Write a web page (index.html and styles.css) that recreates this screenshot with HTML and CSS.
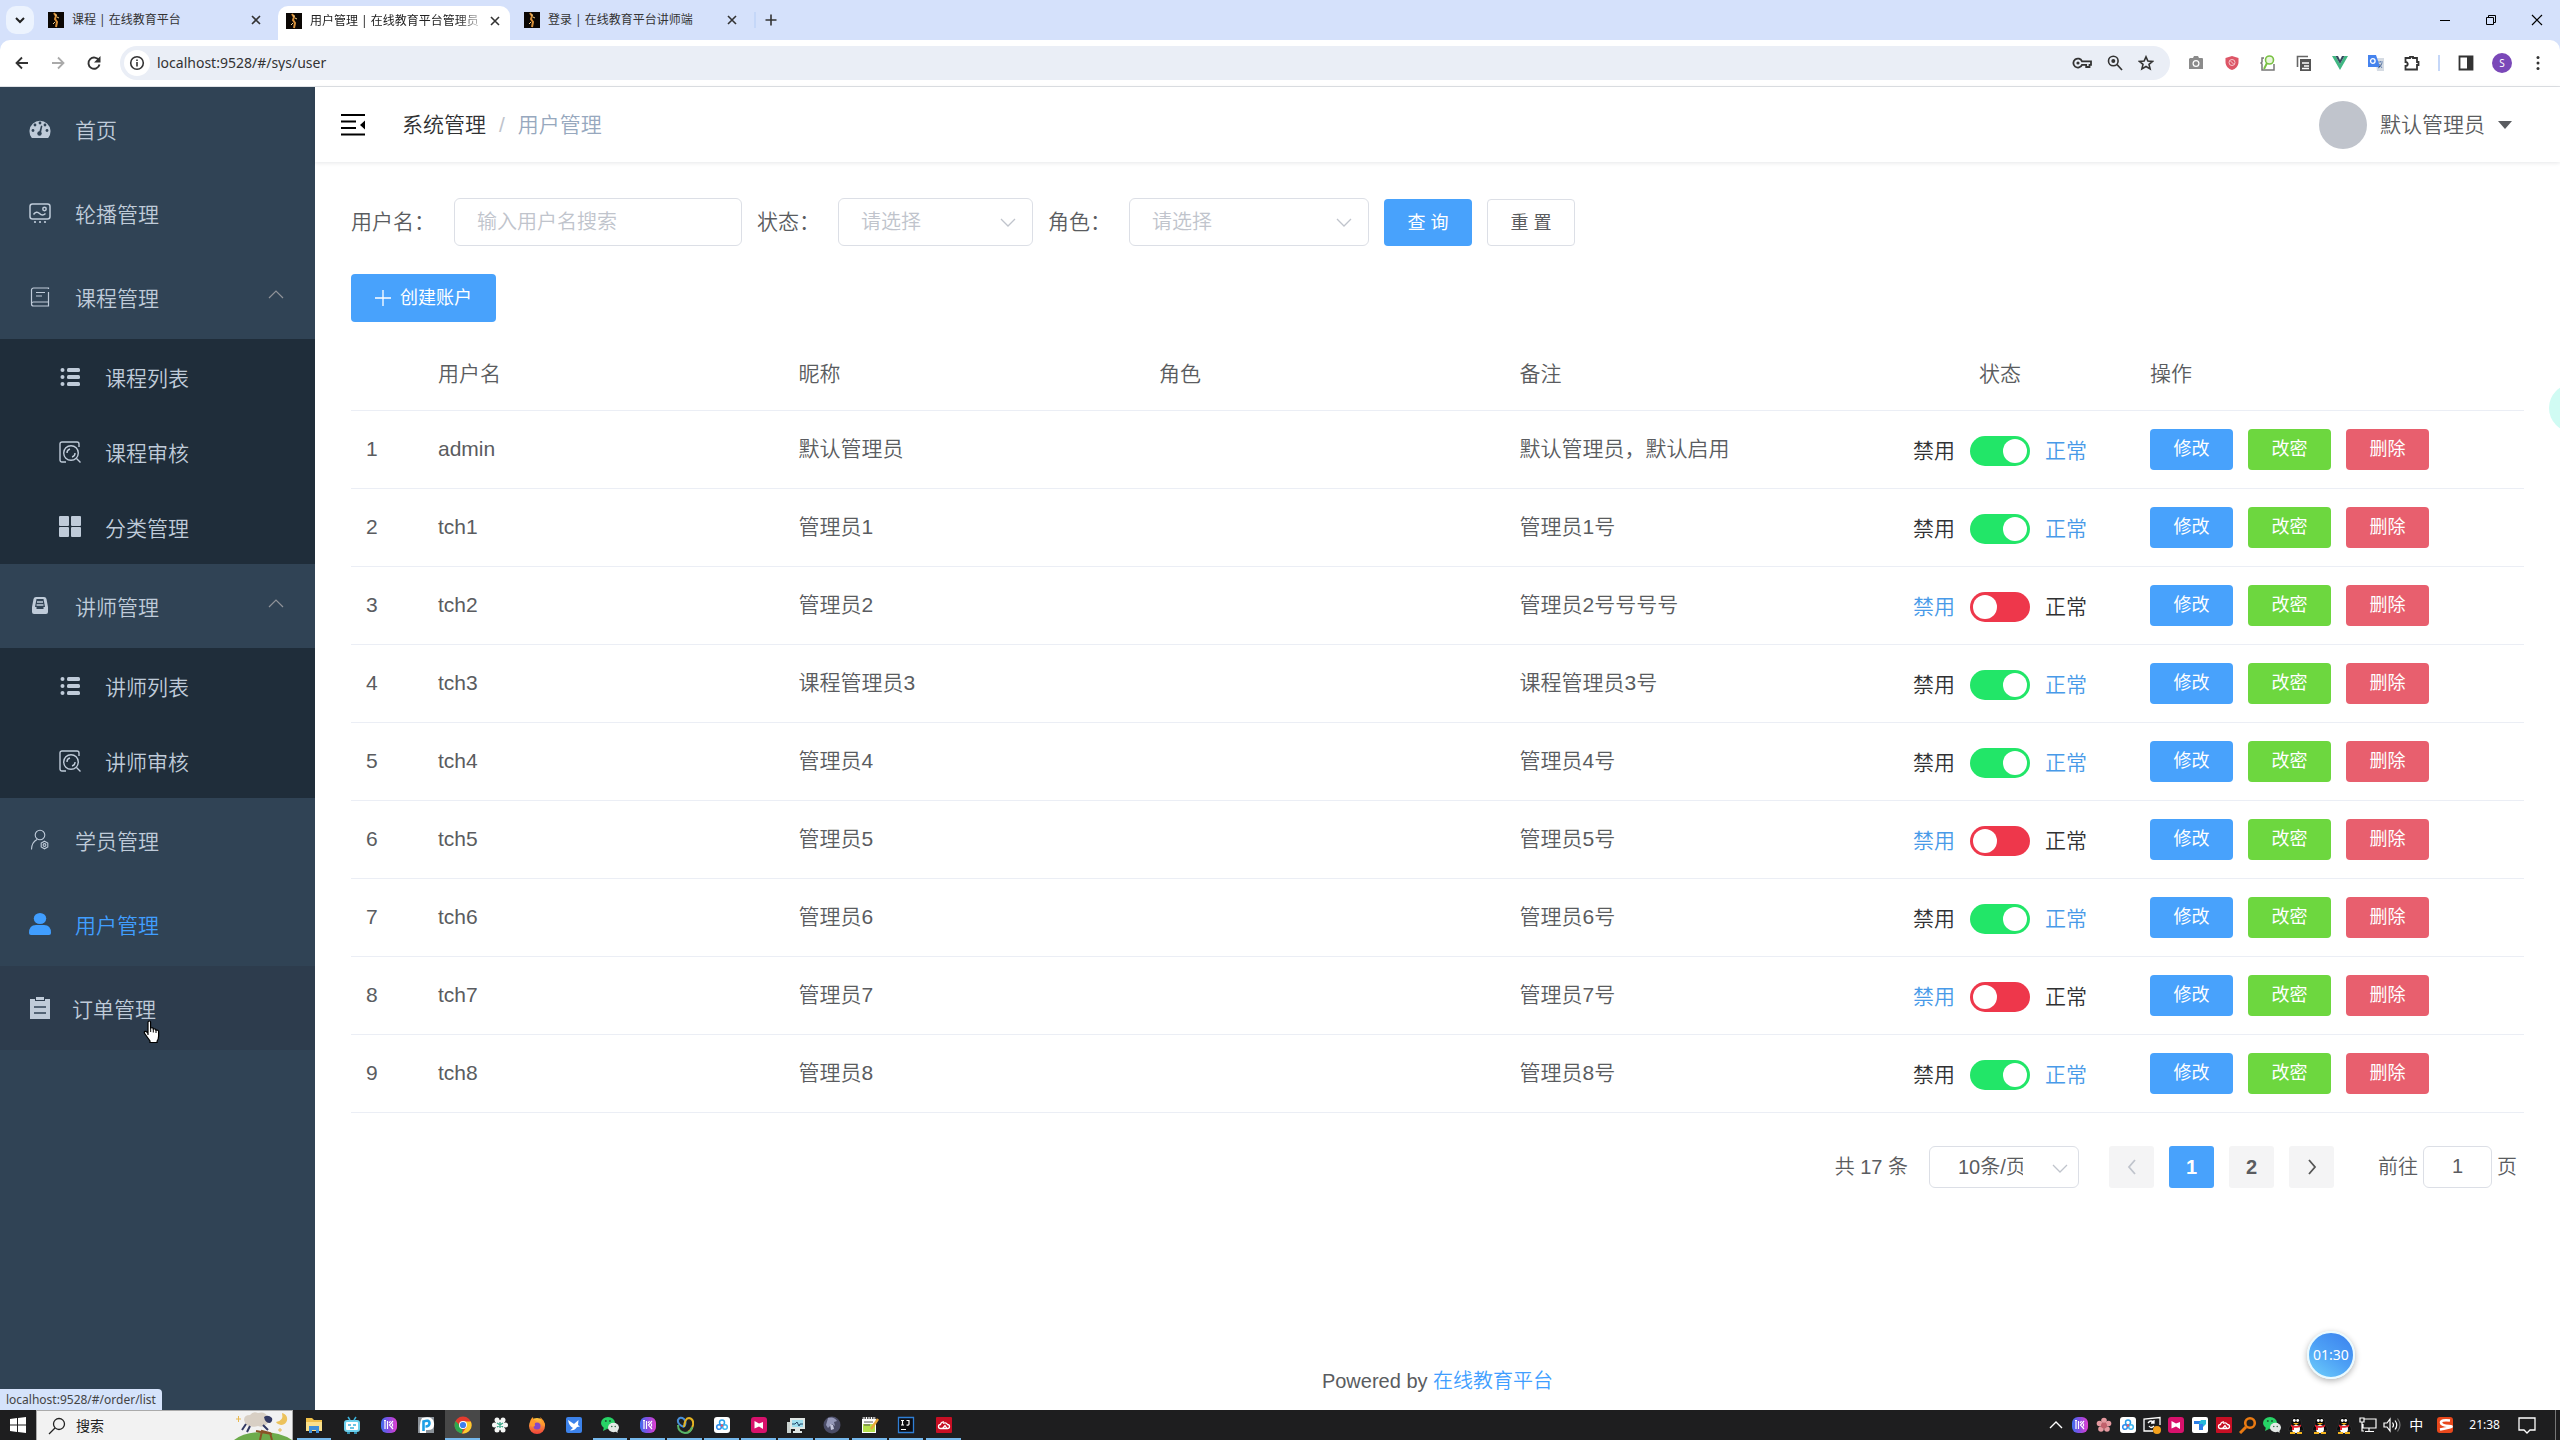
FILE: index.html
```html
<!DOCTYPE html>
<html lang="zh-CN">
<head>
<meta charset="utf-8">
<title>用户管理 | 在线教育平台管理员端</title>
<link rel="stylesheet" href="styles.css">
</head>
<body>
<svg class="sprite" aria-hidden="true">
  <defs>
    <linearGradient id="g-violet" x1="0" y1="0" x2="1" y2="0"><stop offset="0" stop-color="#3f6df0"/><stop offset=".5" stop-color="#8a4be0"/><stop offset="1" stop-color="#e23fd0"/></linearGradient>
    <linearGradient id="g-fire" x1="0" y1="0" x2="0" y2="1"><stop offset="0" stop-color="#ffc93c"/><stop offset="1" stop-color="#f0413a"/></linearGradient>
  </defs>
  <symbol id="favicon" viewBox="0 0 16 16"><path fill="#0b0704" d="M0 0h16v16H0z"/><path fill="none" stroke="#d9913a" stroke-width="2" d="M6 1l2 3-1 3 2 3-1 5"/><path stroke="#f6d18a" d="M9 5l2 1M7 10l-2 2M8 2v2"/></symbol>
  <symbol id="close" viewBox="0 0 16 16"><path fill="none" stroke="currentColor" stroke-width="1.6" d="M4 4l8 8M12 4l-8 8"/></symbol>
  <symbol id="chev" viewBox="0 0 16 16"><path fill="none" stroke="currentColor" stroke-width="1.300" d="M1 5l7 7 7-7"/></symbol>
  <symbol id="chev-up" viewBox="0 0 16 16"><path fill="none" stroke="currentColor" stroke-width="1.200" d="M1 11l7-7 7 7"/></symbol>
  <symbol id="list" viewBox="0 0 20 20"><g fill="currentColor"><circle cx="2.500" cy="3" r="2"/><circle cx="2.500" cy="10" r="2"/><circle cx="2.500" cy="17" r="2"/><rect x="7" y="1" width="13" height="4" rx="1.500"/><rect x="7" y="8" width="13" height="4" rx="1.500"/><rect x="7" y="15" width="13" height="4" rx="1.500"/></g></symbol>
  <symbol id="audit" viewBox="0 0 22 22"><g fill="none" stroke="currentColor" stroke-width="1.400"><path d="M7 21H3a2 2 0 0 1-2-2V3a2 2 0 0 1 2-2h15a2 2 0 0 1 2 2v3"/><circle cx="12" cy="12" r="7.300"/><path d="M17.500 17.500L21.500 21.500M8 12a4 4 0 0 1 3-4M16 12a4 4 0 0 1-3 4"/></g></symbol>
  <symbol id="kiwi" viewBox="0 0 18 18"><rect x="1" y="1" width="16" height="16" rx="6" fill="url(#g-violet)"/><path fill="none" stroke="#fff" stroke-width="1.200" d="M5 5v8M7.500 5v8M13 5l-3.500 4 3.500 4M10.500 5l-1.500 2M12.500 7.500v3M4 4.500h2"/></symbol>
  <symbol id="wechat" viewBox="0 0 18 18"><ellipse cx="7" cy="7" rx="7" ry="6" fill="#27d366"/><path fill="#27d366" d="M3 11l-1 4 4-2z"/><ellipse cx="12.500" cy="11.500" rx="5.500" ry="4.700" fill="#e4e9e6"/><path fill="#e4e9e6" d="M14 15l2.500 2V13z"/><g fill="#1c5c35"><circle cx="4.800" cy="5" r="1"/><circle cx="9" cy="5" r="1"/><circle cx="10.800" cy="10.500" r=".7"/><circle cx="14.200" cy="10.500" r=".7"/></g></symbol>
  <symbol id="netdisk" viewBox="0 0 18 18"><rect x="1" y="1" width="16" height="16" rx="3" fill="#fff"/><g fill="none" stroke-width="1.500"><circle cx="9" cy="6.500" r="2.500" stroke="#2ba2ee"/><circle cx="6" cy="11" r="2.300" stroke="#2b8cee"/><circle cx="12" cy="11" r="2.300" stroke="#3bb5f0"/></g><circle cx="9" cy="9.500" r="1.200" fill="#ee5a68"/></symbol>
  <symbol id="ribbon" viewBox="0 0 18 18"><rect x="1" y="1" width="16" height="16" rx="3" fill="#d8116c"/><path fill="#fff" d="M4.500 5l4.500 2.500 4-1.500v7l-4-2.500-4.500 2z"/></symbol>
  <symbol id="redcloud" viewBox="0 0 18 18"><rect x="1" y="1" width="16" height="16" rx="1" fill="#c70f24"/><path fill="none" stroke="#fff" stroke-width="1.300" d="M5.500 12.500a2 2 0 0 1 0-4A3 3 0 0 1 9 6M5.500 12.500h7a2 2 0 0 0 0-4A3 3 0 0 0 8 7.500M7.500 12.500l2.500-3 2 3"/></symbol>
  <symbol id="qq" viewBox="0 0 18 18"><path fill="#0a0a0a" stroke="#555" stroke-width=".3" d="M4 6a5 5 0 0 1 10 0v3c2 2 3 4 2 6-1 0-1-1-2-1-2 4-8 4-10 0-1 0-1 1-2 1-1-2 0-4 2-6z"/><ellipse cx="9" cy="13" rx="4" ry="4" fill="#fff"/><circle cx="7.300" cy="4.500" r="1.400" fill="#fff"/><circle cx="10.700" cy="4.500" r="1.400" fill="#fff"/><path fill="#f5b41c" d="M6 7h6l-3 2zM3 16h5v2H3zM10 16h5v2h-5z"/><path fill="#e5222f" d="M4 8.500c3 2 7 2 10 0v2c-2 1-4 1.500-7 1.300V14H5v-3l-1-.5z"/></symbol>
</svg>

<header class="browser">
  <div class="tabstrip">
    <button class="tab-search" aria-label="搜索标签页"><svg width="12" height="12" viewBox="0 0 12 12"><path fill="none" stroke="#222" stroke-width="2" d="M2 4l4 4 4-4"/></svg></button>
    <div class="tab"><svg class="i16"><use href="#favicon"/></svg><span class="tab-title">课程 | 在线教育平台</span><button class="tab-close" aria-label="关闭"><svg class="i16"><use href="#close"/></svg></button></div>
    <div class="tab tab-active"><svg class="i16"><use href="#favicon"/></svg><span class="tab-title">用户管理 | 在线教育平台管理员</span><button class="tab-close" aria-label="关闭"><svg class="i16"><use href="#close"/></svg></button></div>
    <div class="tab"><svg class="i16"><use href="#favicon"/></svg><span class="tab-title">登录 | 在线教育平台讲师端</span><button class="tab-close" aria-label="关闭"><svg class="i16"><use href="#close"/></svg></button></div>
    <span class="sep"></span>
    <button class="new-tab" aria-label="新标签页"><svg class="i16" viewBox="0 0 16 16"><path stroke="#333" stroke-width="1.600" d="M8 2.500v11M2.500 8h11"/></svg></button>
    <div class="win-buttons">
      <button aria-label="最小化"><svg width="12" height="12" viewBox="0 0 12 12"><path stroke="#000" d="M1 6.500h10"/></svg></button>
      <button aria-label="还原"><svg width="12" height="12" viewBox="0 0 12 12"><path fill="none" stroke="#000" d="M1.500 3.500h7v7h-7zM3.500 3.500v-2h7v7h-2"/></svg></button>
      <button aria-label="关闭"><svg width="12" height="12" viewBox="0 0 12 12"><path stroke="#000" stroke-width="1.200" d="M1 1l10 10M11 1L1 11"/></svg></button>
    </div>
  </div>
  <div class="toolbar">
    <div class="nav-buttons">
      <button aria-label="后退"><svg class="i16" viewBox="0 0 16 16"><path fill="none" stroke="#333" stroke-width="1.800" d="M14 8H3M8 2.500L2.500 8 8 13.500"/></svg></button>
      <button aria-label="前进"><svg class="i16" viewBox="0 0 16 16"><path fill="none" stroke="#aaa" stroke-width="1.800" d="M2 8h11M8 2.500L13.500 8 8 13.500"/></svg></button>
      <button aria-label="刷新"><svg class="i16" viewBox="0 0 16 16"><path fill="none" stroke="#333" stroke-width="1.900" d="M13 5.500A5.600 5.600 0 1 0 13.500 9.500"/><path fill="#333" d="M14.500 1v6.500H8z"/></svg></button>
    </div>
    <div class="omnibox">
      <span class="site-info"><svg class="i16" viewBox="0 0 16 16"><circle cx="8" cy="8" r="6.300" fill="none" stroke="#333" stroke-width="1.600"/><path stroke="#333" stroke-width="1.600" d="M8 7v4.500M8 4.500V6"/></svg></span>
      <input class="url" aria-label="地址栏" value="localhost:9528/#/sys/user">
      <div class="omni-icons">
        <svg width="20" height="16" viewBox="0 0 20 16"><path fill="none" stroke="#333" stroke-width="1.800" d="M10 6.300H19v3.600h-1.500V12h-3.300V9.800H10A4.500 4.500 0 1 1 10 6.300z"/><circle cx="6" cy="8" r="1.600" fill="#333"/></svg>
        <svg class="i16" viewBox="0 0 16 16"><path fill="none" stroke="#333" stroke-width="1.700" d="M10 9.500l5 5.500"/><circle cx="6.300" cy="6" r="4.800" fill="none" stroke="#333" stroke-width="1.600"/><circle cx="6.300" cy="6" r="2" fill="#333"/></svg>
        <svg class="i16" viewBox="0 0 16 16"><path fill="none" stroke="#333" stroke-width="1.600" d="M8 1.800l1.900 4.200 4.600.4-3.500 3 1.100 4.500L8 11.500l-4.100 2.400L5 9.400l-3.500-3L6.100 6z"/></svg>
      </div>
    </div>
    <div class="extensions">
      <svg class="i16" viewBox="0 0 16 16"><path fill="#8b8b8b" d="M2 3h3l1-2h4l1 2h3a1 1 0 0 1 1 1v10H1V4z"/><circle cx="8" cy="8.500" r="3.500" fill="#fff"/><circle cx="8" cy="8.500" r="2.200" fill="#8b8b8b"/></svg>
      <svg class="i16" viewBox="0 0 16 16"><path fill="#dd5566" d="M8 1l6.500 2v4c0 4-3 7-6.500 8-3.500-1-6.500-4-6.500-8V3z"/><circle cx="8" cy="7.500" r="3" fill="none" stroke="#f5c9ce"/><path stroke="#f5c9ce" d="M6 5.500l4 4"/></svg>
      <svg class="i16" viewBox="0 0 16 16"><path fill="none" stroke="#777" stroke-width="1.500" d="M4 3H2v4L1 8l1 1v6h12V9"/><circle cx="9.500" cy="5" r="4" fill="#e9f6dc" stroke="#78c142" stroke-width="1.600"/><path stroke="#78c142" stroke-width="2" d="M7 8l-3 6"/></svg>
      <svg class="i16" viewBox="0 0 16 16"><path fill="none" stroke="#666" stroke-width="1.600" d="M1.500 12V1.500H12"/><path fill="#555" d="M4 4h11v12H4z"/><path stroke="#fff" stroke-width="1.400" d="M6 8h7M8 11h5M6 13.500h7"/></svg>
      <svg class="i16" viewBox="0 0 16 16"><path fill="#41b883" d="M0 1h3.500L8 9l4.500-8H16L8 15z"/><path fill="#35495e" d="M3.500 1H6l2 4 2-4h2.500L8 9z"/></svg>
      <svg class="i16" viewBox="0 0 16 16"><path fill="#d5dbe3" d="M7 3h9v13H9z"/><path fill="#4583ee" d="M0 0h8l4 12H0z"/><circle cx="4.800" cy="6" r="2.300" fill="none" stroke="#fff" stroke-width="1.300"/><path stroke="#6b87b5" d="M10 7h5M12.500 6v1M14 8c-1 3-2 4-4 5M11 9l3 4"/></svg>
      <svg class="i16" viewBox="0 0 16 16"><path fill="none" stroke="#333" stroke-width="1.800" d="M1.500 3h4.500V1.800h3V3h4v4h1.500v3H13v4.500H1.500V11c3 0 3-4 0-4z"/></svg>
      <span class="sep"></span>
      <svg class="i16" viewBox="0 0 16 16"><path fill="none" stroke="#333" stroke-width="1.800" d="M1.500 1.500h13v13h-13z"/><path fill="#333" d="M9 1h6v14H9z"/></svg>
      <span class="profile">S</span>
      <svg class="i16" viewBox="0 0 16 16"><g fill="#333"><circle cx="8" cy="2.500" r="1.500"/><circle cx="8" cy="8" r="1.500"/><circle cx="8" cy="13.500" r="1.500"/></g></svg>
    </div>
  </div>
</header>

<div class="app">
  <nav class="sidebar">
    <a class="item" href="#/home"><svg class="i22" viewBox="0 0 22 22"><path fill="currentColor" d="M2.500 19.500A10.500 10.500 0 1 1 19.500 19.500q-.5 .5-1 .5h-15q-.5 0-1-.5z"/><g fill="#304355"><circle cx="11" cy="5" r="1.400"/><circle cx="6" cy="7" r="1.400"/><circle cx="16" cy="7" r="1.400"/><circle cx="4" cy="12.500" r="1.400"/><circle cx="18" cy="12.500" r="1.400"/><circle cx="10.500" cy="15.500" r="2.200"/><path d="M12 7.500l1.400.4-1.700 8-1.900-.5z"/></g></svg><span>首页</span></a>
    <a class="item" href="#/banner"><svg class="i22" viewBox="0 0 22 22"><g fill="none" stroke="currentColor" stroke-width="1.500"><rect x="1" y="2" width="20" height="15" rx="2.500"/><circle cx="15.500" cy="7" r="1.700"/><path d="M4.500 12.500q3-4 6-1t6 0"/></g><g fill="currentColor"><circle cx="6" cy="20" r="1.100"/><circle cx="11" cy="20" r="1.100"/><circle cx="16" cy="20" r="1.100"/></g></svg><span>轮播管理</span></a>
    <a class="item" href="#/course"><svg class="i22" viewBox="0 0 22 22"><g fill="none" stroke="currentColor" stroke-width="1.200"><path d="M19.500 3V2H4.500a2 2 0 0 0-2 2v14a2 2 0 0 0 2 2h15V6M2.500 17.500a2 2 0 0 1 2-1.500h15M7 6.500h9M7 10h6"/></g></svg><span>课程管理</span><svg class="arrow"><use href="#chev-up"/></svg></a>
    <div class="submenu">
      <a class="item" href="#/course/list"><svg class="i22 list"><use href="#list"/></svg><span>课程列表</span></a>
      <a class="item" href="#/course/audit"><svg class="i22"><use href="#audit"/></svg><span>课程审核</span></a>
      <a class="item" href="#/course/category"><svg class="i22" viewBox="0 0 22 22"><g fill="currentColor"><rect x="0" y="0" width="10" height="10" rx="1"/><rect x="12" y="0" width="10" height="10" rx="1"/><rect x="0" y="11" width="10" height="10" rx="1"/><rect x="12" y="11" width="10" height="10" rx="1"/></g></svg><span>分类管理</span></a>
    </div>
    <a class="item" href="#/teacher"><svg class="i22" viewBox="0 0 22 22"><path fill="currentColor" d="M7 2h8q2 0 2.500 2L19 12v5q0 2-2 2H5q-2 0-2-2v-5L4.500 4Q5 2 7 2z"/><path fill="#304355" d="M7.500 4h7l1.500 8H14.500v2h-7v-2H6z"/><path stroke="currentColor" stroke-width="1.600" d="M8 7h6M7.500 10h7"/></svg><span>讲师管理</span><svg class="arrow"><use href="#chev-up"/></svg></a>
    <div class="submenu">
      <a class="item" href="#/teacher/list"><svg class="i22 list"><use href="#list"/></svg><span>讲师列表</span></a>
      <a class="item" href="#/teacher/audit"><svg class="i22"><use href="#audit"/></svg><span>讲师审核</span></a>
    </div>
    <a class="item" href="#/student"><svg class="i22" viewBox="0 0 22 22"><g fill="none" stroke="currentColor" stroke-width="1.100"><circle cx="11" cy="6" r="4.800"/><path d="M2.500 20.500q0-7 5.500-10M15.500 12.200l3.300 1.900v3.800l-3.300 1.900-3.300-1.900v-3.800z"/><circle cx="15.500" cy="16" r="1.400"/></g></svg><span>学员管理</span></a>
    <a class="item current" href="#/sys/user"><svg class="i22" viewBox="0 0 22 22"><g fill="currentColor"><ellipse cx="11" cy="5.500" rx="6.200" ry="5.500"/><path d="M0 20q0-8 7-8h8q7 0 7 8 0 2-2 2H2q-2 0-2-2z"/></g></svg><span>用户管理</span></a>
    <a class="item hovered" href="#/order/list"><svg class="i22" viewBox="0 0 22 22"><path fill="currentColor" d="M1 2h5v2h10V2h5v20H1zM7 0h8v3H7z"/><path stroke="#304355" stroke-width="1.300" d="M5 10h12M5 16h12"/></svg><span>订单管理</span>
      <svg class="pointer" width="18" height="24" viewBox="0 0 18 24"><path fill="#fff" stroke="#000" stroke-width="1.200" d="M5 15V2.500q0-1.500 1.300-1.500T7.600 2.500V8q2.600-.8 2.700 1 2.400-.6 2.600 1.100 2.500-.4 2.700 1.400V16q0 3-1.500 5v1.500H7V21L2 14q-1.500-2 0-2.600t3 2"/><path stroke="#000" d="M7.700 8v4M10.300 9v3.500M13 10v3"/></svg>
    </a>
    <div class="status-bubble">localhost:9528/#/order/list</div>
  </nav>

  <div class="content">
    <header class="navbar">
      <button class="fold" aria-label="收起菜单"><svg width="24" height="24" viewBox="0 0 24 24"><path stroke="#000" stroke-width="2" d="M0 2h24M0 8.500h15M0 15h15M0 21.500h24"/><path d="M24 7.500v9l-5-4.500z"/></svg></button>
      <div class="crumbs"><a href="#/sys">系统管理</a><span class="slash">/</span><span class="here">用户管理</span></div>
      <button class="account"><span class="avatar"></span><span>默认管理员</span><svg width="14" height="8" viewBox="0 0 14 8"><path fill="currentColor" d="M0 0h14L7 8z"/></svg></button>
    </header>

    <main class="page">
      <form class="filters">
        <div class="field"><label for="f-name" class="wide">用户名：</label><input id="f-name" class="box name" placeholder="输入用户名搜索"></div>
        <div class="field"><label for="f-state">状态：</label><div class="pick"><select id="f-state" class="box state"><option>请选择</option></select><svg><use href="#chev"/></svg></div></div>
        <div class="field"><label for="f-role">角色：</label><div class="pick"><select id="f-role" class="box role"><option>请选择</option></select><svg><use href="#chev"/></svg></div></div>
        <button type="button" class="btn primary">查 询</button>
        <button type="button" class="btn plain">重 置</button>
      </form>
      <button class="btn primary create"><svg class="i16" viewBox="0 0 16 16"><path stroke="#fff" stroke-width="1.300" d="M8 0v16M0 8h16"/></svg>创建账户</button>

      <table class="grid">
        <colgroup><col class="c-no"><col><col><col><col><col class="c-state"><col class="c-act"></colgroup>
        <thead><tr><th></th><th>用户名</th><th>昵称</th><th>角色</th><th>备注</th><th class="mid">状态</th><th>操作</th></tr></thead>
        <tbody>
          <tr><td>1</td><td>admin</td><td>默认管理员</td><td></td><td>默认管理员，默认启用</td><td><label class="switch"><span>禁用</span><input type="checkbox" checked><span>正常</span></label></td><td><div class="acts"><button class="edit">修改</button><button class="pass">改密</button><button class="del">删除</button></div></td></tr>
          <tr><td>2</td><td>tch1</td><td>管理员1</td><td></td><td>管理员1号</td><td><label class="switch"><span>禁用</span><input type="checkbox" checked><span>正常</span></label></td><td><div class="acts"><button class="edit">修改</button><button class="pass">改密</button><button class="del">删除</button></div></td></tr>
          <tr><td>3</td><td>tch2</td><td>管理员2</td><td></td><td>管理员2号号号号</td><td><label class="switch"><span>禁用</span><input type="checkbox"><span>正常</span></label></td><td><div class="acts"><button class="edit">修改</button><button class="pass">改密</button><button class="del">删除</button></div></td></tr>
          <tr><td>4</td><td>tch3</td><td>课程管理员3</td><td></td><td>课程管理员3号</td><td><label class="switch"><span>禁用</span><input type="checkbox" checked><span>正常</span></label></td><td><div class="acts"><button class="edit">修改</button><button class="pass">改密</button><button class="del">删除</button></div></td></tr>
          <tr><td>5</td><td>tch4</td><td>管理员4</td><td></td><td>管理员4号</td><td><label class="switch"><span>禁用</span><input type="checkbox" checked><span>正常</span></label></td><td><div class="acts"><button class="edit">修改</button><button class="pass">改密</button><button class="del">删除</button></div></td></tr>
          <tr><td>6</td><td>tch5</td><td>管理员5</td><td></td><td>管理员5号</td><td><label class="switch"><span>禁用</span><input type="checkbox"><span>正常</span></label></td><td><div class="acts"><button class="edit">修改</button><button class="pass">改密</button><button class="del">删除</button></div></td></tr>
          <tr><td>7</td><td>tch6</td><td>管理员6</td><td></td><td>管理员6号</td><td><label class="switch"><span>禁用</span><input type="checkbox" checked><span>正常</span></label></td><td><div class="acts"><button class="edit">修改</button><button class="pass">改密</button><button class="del">删除</button></div></td></tr>
          <tr><td>8</td><td>tch7</td><td>管理员7</td><td></td><td>管理员7号</td><td><label class="switch"><span>禁用</span><input type="checkbox"><span>正常</span></label></td><td><div class="acts"><button class="edit">修改</button><button class="pass">改密</button><button class="del">删除</button></div></td></tr>
          <tr><td>9</td><td>tch8</td><td>管理员8</td><td></td><td>管理员8号</td><td><label class="switch"><span>禁用</span><input type="checkbox" checked><span>正常</span></label></td><td><div class="acts"><button class="edit">修改</button><button class="pass">改密</button><button class="del">删除</button></div></td></tr>
        </tbody>
      </table>

      <div class="pagination">
        <span>共 17 条</span>
        <div class="pick size"><select class="box" aria-label="每页条数"><option>10条/页</option></select><svg><use href="#chev"/></svg></div>
        <div class="pager">
          <button disabled aria-label="上一页"><svg class="i16" viewBox="0 0 16 16"><path fill="none" stroke="#c0c4cc" stroke-width="1.800" d="M11 1L5 8l6 7"/></svg></button>
          <button class="on">1</button>
          <button>2</button>
          <button aria-label="下一页"><svg class="i16" viewBox="0 0 16 16"><path fill="none" stroke="#555" stroke-width="1.800" d="M5 1l6 7-6 7"/></svg></button>
        </div>
        <label class="jump">前往<input class="box" value="1">页</label>
      </div>

      <footer class="foot">Powered by <a href="#/">在线教育平台</a></footer>
    </main>
    <div class="edge-ball"></div>
    <div class="timer">01:30</div>
  </div>
</div>

<footer class="taskbar">
  <button class="start" aria-label="开始"><svg class="i16" viewBox="0 0 16 16"><path fill="#fff" d="M0 2l7-1v6.500H0zM8 1l8-1v7.500H8zM0 8.500h7V15l-7-1zM8 8.500h8V16l-8-1z"/></svg></button>
  <label class="search"><svg class="i18" viewBox="0 0 18 18"><circle cx="11" cy="7" r="5.500" fill="none" stroke="#222" stroke-width="1.300"/><path stroke="#222" stroke-width="1.300" d="M7 11l-6 6"/></svg><input placeholder="搜索" aria-label="搜索">
    <svg width="58" height="29" viewBox="0 0 58 29"><path fill="#6dab4b" d="M0 29q10-8 28-8t30 8z"/><path fill="none" stroke="#8a5326" stroke-width="2" d="M26 29l2-9 8 2 2 7M22 20l16 3"/><path fill="#d8cfc4" d="M10 9q0-5 6-5 3-4 8-2 7-2 9 3 4 4 0 8-4 4-9 2-12 3-14-6z"/><path fill="#333a63" d="M30 6q4-3 8 1 1 3-2 5-5 0-6-6z"/><path fill="none" stroke="#333a63" stroke-width="2" d="M12 13l-4 6M16 15l-3 6M29 14l5 5"/><path fill="#ecc25b" d="M48 2a6 6 0 1 1-6 9q8-1 6-9z"/><path stroke="#e8b850" d="M2 8h5M4.500 5v6M44 19h4M46 17v4"/></svg></label>
  <div class="apps">
    <span class="run two"><svg class="i18" viewBox="0 0 18 18"><path fill="#f0c04a" d="M1 2h6l2 2h8v11H1z"/><path fill="#fbe08a" d="M1 6h16v9H1z"/><path fill="#3f8fd8" d="M4 10h10v7h-3v-3H7v3H4z"/></svg></span>
    <span><svg class="i18" viewBox="0 0 18 18"><rect x="1" y="4" width="16" height="12" rx="3" fill="#6fd2ee"/><rect x="3" y="6" width="12" height="8" rx="1" fill="#fff"/><path stroke="#3bb3dc" stroke-width="1.500" d="M5 1l2 3M13 1l-2 3M5 9h3M10 9h3M7 12h4M4 17h3M11 17h3"/></svg></span>
    <span><svg class="i18"><use href="#kiwi"/></svg></span>
    <span><svg class="i18" viewBox="0 0 18 18"><rect x="1" y="1" width="16" height="16" fill="#8b9299"/><path fill="#fff" d="M5 2q11-3 12 5t-8 7v3H3q-1-10 2-15z"/><path fill="none" stroke="#1fa0e6" stroke-width="2.600" d="M6.500 15V5.500q6-2 6 1.500t-4 3.500"/></svg></span>
    <span class="run front"><svg class="i18" viewBox="0 0 18 18"><circle cx="9" cy="9" r="8.500" fill="#e33b2e"/><path fill="#2da94f" d="M1.500 5l7.500 8-1 4.500A8.500 8.500 0 0 1 1.500 5z"/><path fill="#fccb2f" d="M9 5.500h7.800A8.500 8.500 0 0 1 8 17.500l5-7z"/><circle cx="9" cy="9" r="4" fill="#fff"/><circle cx="9" cy="9" r="3.100" fill="#3f7fee"/></svg></span>
    <span><svg class="i18" viewBox="0 0 18 18"><g fill="#f5f7f5"><circle cx="6" cy="4" r="2.500"/><circle cx="12" cy="4" r="2.500"/><circle cx="3.500" cy="9" r="2.500"/><circle cx="14.500" cy="9" r="2.500"/><circle cx="6" cy="14" r="2.500"/><circle cx="12" cy="14" r="2.500"/><circle cx="9" cy="9" r="5"/></g><path fill="none" stroke="#39a788" stroke-width="1.300" d="M9 6v6M6 7l6 4M6 11l6-4"/></svg></span>
    <span><svg class="i18" viewBox="0 0 18 18"><circle cx="9" cy="10" r="8" fill="url(#g-fire)"/><circle cx="9" cy="10" r="3.500" fill="#8448c8"/><path fill="#ff9a2b" d="M2 8q0-5 3-7 0 3 4 4-3 1-2 5-4 2-5-2zM12 1q5 4 5 9l-3-1q0-4-2-8z"/></svg></span>
    <span><svg class="i18" viewBox="0 0 18 18"><rect x="1" y="1" width="16" height="16" rx="2" fill="#3c82ea"/><path fill="#fff" d="M3 4l6 4 4.500-4-.5 5 2 1.500-3 .5Q10 14.500 5 14.500l3-2.500q-4-2-5-8z"/></svg></span>
    <span class="run two"><svg class="i18"><use href="#wechat"/></svg></span>
    <span class="run"><svg class="i18"><use href="#kiwi"/></svg></span>
    <span class="run"><svg class="i18" viewBox="0 0 18 18"><g fill="none" stroke-width="2"><path stroke="#4a90d9" d="M8 11Q1 8 2 4q2-4 6-1 3 4 0 8"/><path stroke="#e6b422" d="M8 11q1-9 5-9 5 1 4 7-1 5-5 7"/><path stroke="#58b368" d="M2 9q0 7 7 8 6 0 7-6"/></g></svg></span>
    <span class="run"><svg class="i18"><use href="#netdisk"/></svg></span>
    <span class="run"><svg class="i18"><use href="#ribbon"/></svg></span>
    <span class="run"><svg class="i18" viewBox="0 0 18 18"><path fill="#c9d1ce" d="M0 6h4v11H0z"/><path fill="#dfe6e4" d="M3 2h15v11H3zM8 13h5v2h2v2H6v-2h2z"/><path fill="#9fdfee" d="M5 4h11v7H5z"/><path fill="none" stroke="#246" d="M5 8h3l2-2 2 4 1-2h3"/></svg></span>
    <span class="run two"><svg class="i18" viewBox="0 0 18 18"><circle cx="9" cy="9" r="8.500" fill="#4a4c66"/><path fill="#9498b8" d="M5 2q6-2 9 3l-3 1 1 4-3-2-4 4-2-3z"/><path fill="#c3c6dc" d="M7 8l3 1 1 4-3 1z"/></svg></span>
    <span class="run"><svg class="i18" viewBox="0 0 18 18"><path fill="#fff" d="M1 1h14v16H1z"/><path fill="#b5e04c" d="M2 8h12v8H2z"/><path stroke="#555" stroke-dasharray="1.500 1" stroke-width="2" d="M1 2h14"/><path stroke="#555" d="M3 6h9M3 9h6"/><path stroke="#e8a93b" stroke-width="2.500" d="M17 3l-7 10"/></svg></span>
    <span class="run two"><svg class="i18" viewBox="0 0 18 18"><path fill="#0c0c10" stroke="#2f7fd6" stroke-width="1.300" d="M1.500 1.500h15v15h-15z"/><path fill="none" stroke="#fff" stroke-width="1.200" d="M4 4.500h3M5.500 4.500v4.500M4 9h3M9.500 4.500H12v3.500q0 1.500-2.500 1M4 13.500h5"/></svg></span>
    <span class="run"><svg class="i18"><use href="#redcloud"/></svg></span>
  </div>
  <div class="tray">
    <svg class="i18" viewBox="0 0 18 18"><path fill="none" stroke="#fff" stroke-width="1.400" d="M3 12l6-6 6 6"/></svg>
    <svg class="i18"><use href="#kiwi"/></svg>
    <svg class="i18" viewBox="0 0 18 18"><g fill="#e59aa0"><circle cx="9" cy="4.500" r="2.800"/><circle cx="13.500" cy="7.500" r="2.800"/><circle cx="12" cy="13" r="2.800"/><circle cx="6" cy="13" r="2.800"/><circle cx="4.500" cy="7.500" r="2.800"/></g><circle cx="9" cy="9.500" r="3" fill="#c2626c"/></svg>
    <svg class="i18"><use href="#netdisk"/></svg>
    <svg class="i18" viewBox="0 0 18 18"><path fill="none" stroke="#fff" stroke-width="1.300" d="M17 9V1.500L1 3v12h9M5 7q3-4 6 0M11 4v3H8M11 10q-3 3-5 0"/><circle cx="14" cy="14" r="4" fill="#f5a11c"/></svg>
    <svg class="i18"><use href="#ribbon"/></svg>
    <svg class="i18" viewBox="0 0 18 18"><rect x="1" y="1" width="16" height="16" rx="2" fill="#fff"/><path fill="#2a7de8" d="M3 5h7l2 2v3H9V8H3z"/><path fill="#24b8d8" d="M10 4h5v4l-3 3H8V7z"/><path fill="#2a7de8" d="M8 8h4v6H8z"/></svg>
    <svg class="i18"><use href="#redcloud"/></svg>
    <svg class="i18" viewBox="0 0 18 18"><circle cx="11" cy="7" r="4.800" fill="none" stroke="#ea7a12" stroke-width="2.600"/><path stroke="#ea7a12" stroke-width="3" d="M7 11l-6 6"/></svg>
    <svg class="i18"><use href="#wechat"/></svg>
    <svg class="i18"><use href="#qq"/></svg>
    <svg class="i18"><use href="#qq"/></svg>
    <svg class="i18"><use href="#qq"/></svg>
    <svg class="i18" viewBox="0 0 18 18"><path fill="none" stroke="#fff" stroke-width="1.200" d="M5 3h12v9H4V8M10 12v3M6 15.500h9M1 2h4v4H1zM3 6v9h2"/></svg>
    <svg class="i18" viewBox="0 0 18 18"><path fill="none" stroke="#fff" stroke-width="1.200" d="M1 7h3l3-4v12l-3-4H1zM9.500 6.500q2 2.500 0 5M12 4.500q3.500 4.500 0 9"/><path fill="none" stroke="#777" stroke-width="1.200" d="M14.500 2.500q5 6.500 0 13"/></svg>
    <span class="ime">中</span>
    <svg class="i18 sogou" viewBox="0 0 18 18"><rect x="1" y="1" width="16" height="16" rx="3" fill="#e8481c"/><path fill="none" stroke="#fff" stroke-width="2.600" d="M14 4.500Q5 3.500 5 6.500T13 10t-9 3.500"/></svg>
    <time>21:38</time>
    <svg class="i18" viewBox="0 0 18 18"><path fill="none" stroke="#fff" stroke-width="1.300" d="M1 2h16v12h-5l-3 3-3-3H1z"/></svg>
    <span class="desk"></span>
  </div>
</footer>
</body>
</html>
```
FILE: styles.css
```css
* { box-sizing: border-box; }
body {
  margin: 0;
  height: 100vh;
  display: flex;
  flex-direction: column;
  overflow: hidden;
  background: #fff;
  color: #5a5c60;
  font: 350 21px/30px "Liberation Sans", "Noto Sans CJK SC", sans-serif;
}
button, input, select { font: inherit; color: inherit; margin: 0; }
button { border: 0; padding: 0; background: none; }
a { color: inherit; text-decoration: none; }
svg { display: block; flex: none; }
.sprite { position: absolute; width: 0; height: 0; }
.i16 { width: 16px; height: 16px; }
.i18 { width: 18px; height: 18px; }
.i22 { width: 22px; height: 22px; }

/* browser window */
.browser {
  flex: none;
  background: #d5e1fb;
  color: #333;
  font: 400 12px/16px "Noto Sans", "Noto Sans CJK SC", sans-serif;
}
.browser button { display: grid; place-items: center; }
.tabstrip { display: flex; align-items: center; gap: 6px; height: 40px; padding-left: 6px; }
.tab-search { width: 28px; height: 28px; border-radius: 10px; background: #ecf3fe; }
.tab {
  display: flex;
  align-items: center;
  gap: 8px;
  width: 232px;
  height: 34px;
  padding: 0 8px;
}
.tab-active {
  align-self: flex-end;
  padding-bottom: 5px;
  border-radius: 10px 10px 0 0;
  background: #fff;
}
.tab-title { flex: 1; white-space: nowrap; }
.tab-active .tab-title { color: #222; mask-image: linear-gradient(to right, #000 88%, transparent 105%); }
.sep { width: 2px; height: 16px; background: #c5d7f8; }
.new-tab { width: 18px; height: 28px; }
.win-buttons { display: flex; margin-left: auto; }
.win-buttons button { width: 46px; height: 30px; }
.toolbar {
  display: flex;
  align-items: center;
  height: 47px;
  border-bottom: 1px solid #dfe2e6;
  border-radius: 10px 10px 0 0;
  background: #fff;
}
.nav-buttons { display: flex; margin-right: 8px; padding-left: 4px; }
.nav-buttons button { width: 36px; height: 34px; }
.omnibox {
  flex: 1;
  display: flex;
  align-items: center;
  gap: 7px;
  height: 34px;
  padding: 0 16px 0 4px;
  border-radius: 17px;
  background: #eaeef6;
}
.site-info { display: grid; place-items: center; width: 26px; height: 26px; border-radius: 13px; background: #fff; }
.url { flex: 1; border: 0; padding: 0; background: none; font-size: 14px; }
.omni-icons { display: flex; gap: 15px; }
.extensions { display: flex; align-items: center; gap: 20px; padding: 0 14px 0 18px; }
.extensions .sep { margin: 0 -2px; }
.profile {
  width: 20px;
  height: 20px;
  margin: 0 -2px;
  border-radius: 10px;
  background: #7a48b8;
  color: #fff;
  font-size: 10px;
  line-height: 20px;
  text-align: center;
}

/* application */
.app { flex: 1; display: flex; min-height: 0; }
.sidebar { position: relative; flex: none; width: 315px; background: #304355; color: #bfcbd9; }
.item {
  position: relative;
  display: flex;
  align-items: center;
  gap: 24px;
  height: 84px;
  padding: 4px 30px 0 29px;
}
.item > .i22 { margin-bottom: 4px; }
.submenu { background: #1f2d3a; }
.submenu .item { height: 75px; padding-left: 59px; }
.list { padding: 1px; }
.arrow { width: 16px; height: 16px; margin: 0 1px 8px auto; color: #909399; }
.current { color: #409eff; }
.hovered { gap: 21px; background: #2d3c4d; }
.pointer { position: absolute; left: 143px; top: 54px; }
.status-bubble {
  position: absolute;
  left: 0;
  bottom: 0;
  height: 21px;
  padding: 0 6px;
  border-radius: 0 4px 0 0;
  background: #d5e3fb;
  color: #444;
  font: 400 12px/21px "Noto Sans", sans-serif;
}
.content { position: relative; flex: 1; display: flex; flex-direction: column; min-width: 0; }
.navbar {
  display: flex;
  align-items: center;
  height: 75px;
  padding: 0 48px 0 26px;
  box-shadow: 0 1px 4px rgba(0, 21, 41, .1);
}
.crumbs { display: flex; gap: 13px; margin-left: 37px; color: #303133; }
.slash { color: #c0c4cc; }
.here { color: #97a8be; }
.account { display: flex; align-items: center; gap: 13px; margin-left: auto; }
.avatar { width: 48px; height: 48px; border-radius: 24px; background: #c0c4cc; }
.page { flex: 1; display: flex; flex-direction: column; padding: 36px 36px 14px; }
.filters { display: flex; align-items: flex-end; gap: 15px; }
.field { display: flex; align-items: center; }
.field label { width: 81px; }
.field .wide { width: 103px; }
.box {
  appearance: none;
  width: 100%;
  height: 48px;
  padding: 0 22px;
  border: 1px solid #dcdfe6;
  border-radius: 6px;
  background: #fff;
  font-size: 20px;
}
.box::placeholder, .pick .state, .pick .role { color: #c0c4cc; }
.name { width: 288px; }
.state { width: 195px; }
.role { width: 240px; }
.pick { position: relative; }
.pick svg { position: absolute; right: 17px; top: 16px; width: 16px; height: 16px; color: #c0c4cc; }
.btn {
  display: flex;
  align-items: center;
  justify-content: center;
  gap: 9px;
  width: 88px;
  height: 47px;
  border-radius: 4px;
  font-size: 18px;
  font-weight: 400;
}
.primary { background: #48a2fc; color: #fff; }
.plain { border: 1px solid #dcdfe6; background: #fff; }
.create { width: 145px; height: 48px; margin: 28px 0 15px; }
.grid { width: 100%; border-collapse: collapse; table-layout: fixed; }
.c-no { width: 72px; }
.c-state { width: 270px; }
.c-act { width: 389px; }
.grid th, .grid td { height: 78px; padding: 0 15px; border-bottom: 1px solid #ebeef5; text-align: left; font-weight: inherit; }
.grid th { height: 73px; padding-top: 2px; }
.grid .mid { text-align: center; }
.switch { display: flex; align-items: center; justify-content: center; gap: 15px; padding-top: 3px; color: #303133; }
.switch input { appearance: none; display: flex; align-items: center; width: 60px; height: 30px; padding: 3px; border-radius: 15px; background: #ee374b; }
.switch input::before { content: ""; width: 24px; height: 24px; border-radius: 12px; background: #fff; }
.switch input:checked { justify-content: flex-end; background: #22e668; }
.switch:has(:checked) span:last-child, .switch:not(:has(:checked)) span:first-child { color: #489ae8; }
.acts { display: flex; gap: 15px; }
.acts button { width: 83px; height: 41px; border-radius: 4px; color: #fff; font-size: 18px; font-weight: 400; }
.edit { background: #48a2fc; }
.pass { background: #6dd73f; }
.del { background: #e85f6e; }
.pagination { display: flex; justify-content: flex-end; align-items: center; margin-top: 33px; padding-right: 7px; font-size: 20px; }
.pagination .box { height: 42px; }
.size { width: 150px; margin: 0 30px 0 21px; }
.size .box { padding: 0 55px 0 28px; }
.size svg { right: 11px; top: 14px; }
.pager { display: flex; gap: 15px; }
.pager button { display: grid; place-items: center; width: 45px; height: 42px; border-radius: 3px; background: #f4f4f5; font-weight: 700; }
.pager .on { background: #48a2fc; color: #fff; }
.jump { display: flex; align-items: center; gap: 5px; margin-left: 44px; }
.jump .box { width: 69px; text-align: center; }
.foot { margin-top: auto; text-align: center; font-size: 20px; }
.foot a { color: #409eff; }
.timer {
  position: absolute;
  right: 205px;
  bottom: 31px;
  width: 48px;
  height: 48px;
  border: 2px solid #eafaff;
  border-radius: 24px;
  background: linear-gradient(35deg, #6fd0fb, #4da0f5 50%, #3a80ee);
  box-shadow: 0 2px 6px rgba(0, 0, 0, .3);
  color: #fff;
  font: 400 14px/44px "Noto Sans", sans-serif;
  text-align: center;
}
.edge-ball { position: absolute; right: 0; top: 297px; width: 11px; height: 48px; overflow: hidden; }
.edge-ball::before { content: ""; display: block; width: 48px; height: 48px; border-radius: 24px; background: #d0fbf3; }

/* desktop taskbar */
.taskbar { flex: none; display: flex; height: 30px; background: #1e1e1f; color: #fff; font: 400 14px/30px "Noto Sans", "Noto Sans CJK SC", sans-serif; }
.start { display: grid; place-items: center; width: 36px; }
.search { display: flex; align-items: center; gap: 10px; width: 257px; padding: 0 0 0 11px; border: 1px solid #aaa; border-bottom: 0; background: #f2f2f2; }
.search input { flex: 1; min-width: 0; border: 0; padding: 0; background: none; color: #222; }
.search input::placeholder { color: #222; }
.apps { display: flex; gap: 2px; padding-left: 4px; }
.apps span { display: grid; place-items: center; width: 35px; }
.run { box-shadow: inset 0 -2px #76b9ed; }
.two { border-right: 1px solid #1e1e1f; }
.front { background: #484848; }
.tray { display: flex; align-items: center; gap: 6px; margin-left: auto; }
.ime { width: 18px; text-align: center; font-size: 14px; }
.sogou { margin-left: 5px; }
.tray time { margin: 0 12px 0 9px; font-size: 12px; }
.desk { width: 1px; height: 30px; margin: 0 4px 0 13px; background: #777; }
```
